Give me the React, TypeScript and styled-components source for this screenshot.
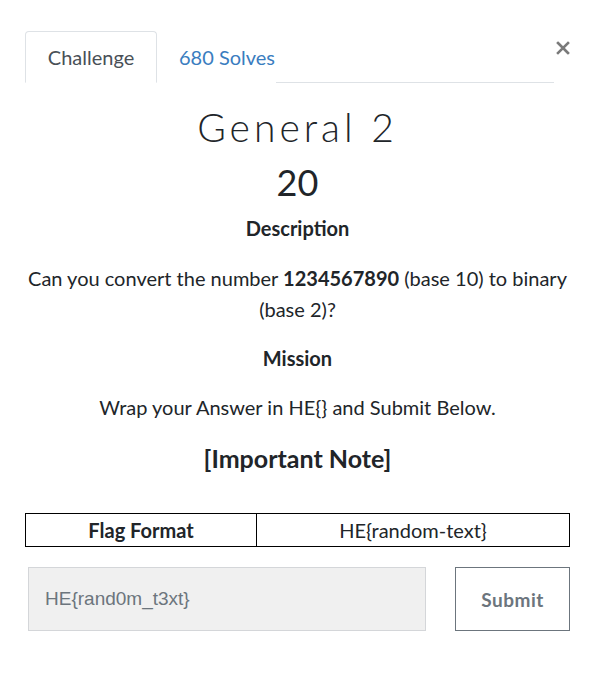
import React from "react";
import styled, { createGlobalStyle } from "styled-components";

const Global = createGlobalStyle`
  html, body { margin: 0; padding: 0; background: #fff; }
  body { font-family: "Lato", "Noto Sans", sans-serif; color: #212529; }
`;

const Page = styled.div`
  width: 545px;
  padding: 31px 0 0 25px;
`;

const Header = styled.div`
  display: flex;
  align-items: flex-start;
`;

const Tabs = styled.div`
  display: flex;
  flex-shrink: 0;
  width: 529px;
  border-bottom: 1px solid #dee2e6;
`;

const Tab = styled.div<{ $active?: boolean }>`
  box-sizing: border-box;
  height: 52px;
  margin-bottom: -1px;
  padding: 0 0 0 21px;
  display: flex;
  align-items: center;
  font-size: 20px;
  border: 1px solid ${(p) => (p.$active ? "#dee2e6" : "transparent")};
  border-bottom-color: ${(p) => (p.$active ? "#fff" : "transparent")};
  border-top-left-radius: 4px;
  border-top-right-radius: 4px;
  background: #fff;
  color: ${(p) => (p.$active ? "#495057" : "#3a7dc0")};
  width: ${(p) => (p.$active ? "132px" : "auto")};
  justify-content: ${(p) => (p.$active ? "center" : "flex-start")};
  ${(p) => (p.$active ? "padding: 0;" : "")}
`;

const Close = styled.div`
  flex-shrink: 0;
  margin-left: 1px;
  margin-top: 9px;
  width: 16px;
  height: 16px;
  display: flex;
  align-items: center;
  justify-content: center;
`;

const Body = styled.div`
  display: flex;
  flex-direction: column;
  align-items: center;
  text-align: center;
`;

const Title = styled.h2`
  margin: 21px 0 0 0;
  font-family: "Lato", sans-serif;
  font-weight: 300;
  font-size: 39px;
  letter-spacing: 4px;
  line-height: 46px;
  color: #212529;
`;

const Points = styled.h3`
  margin: 12px 0 0 0;
  font-weight: 400;
  font-size: 36px;
  line-height: 40px;
`;

const Heading = styled.div<{ $size?: number; $gap: number }>`
  margin-top: ${(p) => p.$gap}px;
  font-weight: 700;
  font-size: ${(p) => p.$size ?? 20}px;
  line-height: 28px;
`;

const Para = styled.p<{ $gap: number }>`
  margin: ${(p) => p.$gap}px 0 0 0;
  font-size: 20px;
  line-height: 31px;
`;

const Table = styled.table`
  width: 545px;
  border-collapse: collapse;
  font-size: 20px;
  margin-top: 41px;
  td {
    border: 1px solid #000;
    height: 32px;
    padding: 0;
    text-align: center;
  }
`;

const FlagCell = styled.td`
  width: 230px;
  font-weight: 700;
`;

const Form = styled.div`
  display: flex;
  width: 545px;
  margin-top: 20px;
  justify-content: space-between;
  padding-left: 3px;
  box-sizing: border-box;
`;

const Input = styled.input`
  box-sizing: border-box;
  width: 398px;
  height: 64px;
  background: #f0f0f0;
  border: 1px solid #d4d6d9;
  padding: 0 16px;
  font-family: "Liberation Sans", Arial, sans-serif;
  font-size: 19px;
  outline: none;
  &::placeholder { color: #6c757d; }
`;

const Button = styled.button`
  box-sizing: border-box;
  width: 115px;
  height: 64px;
  background: #fff;
  border: 1px solid #6c757d;
  font-family: "Lato", sans-serif;
  font-weight: 700;
  font-size: 19px;
  letter-spacing: 0.5px;
  color: #6c757d;
`;

export default function App() {
  return (
    <>
      <Global />
      <Page>
        <Header>
          <Tabs>
            <Tab $active>Challenge</Tab>
            <Tab>680 Solves</Tab>
          </Tabs>
          <Close>
            <svg width="14" height="14" viewBox="0 0 14 14">
              <path d="M2 2 L12 12 M12 2 L2 12" stroke="#7a7a7a" strokeWidth="2.6" strokeLinecap="square" />
            </svg>
          </Close>
        </Header>
        <Body>
          <Title>General 2</Title>
          <Points>20</Points>
          <Heading $gap={12}>Description</Heading>
          <Para $gap={21}>
            Can you convert the number <b>1234567890</b> (base 10) to binary (base 2)?
          </Para>
          <Heading $gap={19}>Mission</Heading>
          <Para $gap={20}>Wrap your Answer in HE{"{}"} and Submit Below.</Para>
          <Heading $gap={21} $size={25}>[Important Note]</Heading>
          <Table>
            <tbody>
              <tr>
                <FlagCell>Flag Format</FlagCell>
                <td>HE{"{random-text}"}</td>
              </tr>
            </tbody>
          </Table>
          <Form>
            <Input placeholder="HE{rand0m_t3xt}" />
            <Button>Submit</Button>
          </Form>
        </Body>
      </Page>
    </>
  );
}
